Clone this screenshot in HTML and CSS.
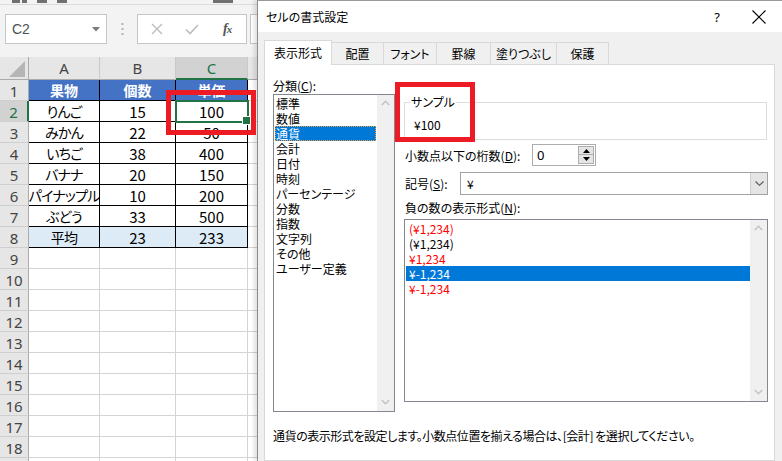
FILE: index.html
```html
<!DOCTYPE html>
<html lang="ja">
<head>
<meta charset="utf-8">
<title>セルの書式設定</title>
<link rel="stylesheet" href="styles.css">
</head>
<body>
<div class="screen">
  <section class="sheet">
    <div class="ribbon-edge">
      <span class="rb rb1"></span><span class="rb rb2"></span><span class="rb rb3"></span><span class="rb rb4"></span><span class="rb rb5"></span>
    </div>
    <div class="formula-bar">
      <div class="namebox">
        <span class="nb-text">C2</span>
        <svg class="nb-arrow" width="8" height="5" viewBox="0 0 8 5"><path d="M0 0H8L4 4.5Z" fill="#7a7a7a"/></svg>
      </div>
      <div class="grip">
        <svg width="3" height="12" viewBox="0 0 3 12"><rect x="0.5" y="0" width="2" height="2" fill="#b4b4b4"/><rect x="0.5" y="5" width="2" height="2" fill="#b4b4b4"/><rect x="0.5" y="10" width="2" height="2" fill="#b4b4b4"/></svg>
      </div>
      <div class="fb-buttons">
        <svg class="fb-icon" width="12" height="12" viewBox="0 0 12 12"><path d="M1 1L11 11M11 1L1 11" stroke="#bcbcbc" stroke-width="1.4" fill="none"/></svg>
        <svg class="fb-icon" width="14" height="11" viewBox="0 0 14 11"><path d="M1 5.5L5 9.5L13 1" stroke="#bcbcbc" stroke-width="1.6" fill="none"/></svg>
        <span class="fx">f<span class="fx-x">x</span></span>
      </div>
      <div class="fb-input"></div>
    </div>
    <div class="grid">
      <div class="corner"><svg width="29" height="23" viewBox="0 0 29 23"><path d="M25 4V20H9Z" fill="#b5b5b5"/></svg></div>
      <div class="ch">A</div><div class="ch">B</div><div class="ch on">C</div><div class="ch x"></div>

      <div class="rh">1</div><div class="c t hd jp">果物</div><div class="c t hd jp">個数</div><div class="c t hd jp">単価</div><div class="c x"></div>
      <div class="rh on">2</div><div class="c t jp">りんご</div><div class="c t">15</div><div class="c t sel">100</div><div class="c x"></div>
      <div class="rh">3</div><div class="c t jp">みかん</div><div class="c t">22</div><div class="c t">50</div><div class="c x"></div>
      <div class="rh">4</div><div class="c t jp">いちご</div><div class="c t">38</div><div class="c t">400</div><div class="c x"></div>
      <div class="rh">5</div><div class="c t jp">バナナ</div><div class="c t">20</div><div class="c t">150</div><div class="c x"></div>
      <div class="rh">6</div><div class="c t jp">パイナップル</div><div class="c t">10</div><div class="c t">200</div><div class="c x"></div>
      <div class="rh">7</div><div class="c t jp">ぶどう</div><div class="c t">33</div><div class="c t">500</div><div class="c x"></div>
      <div class="rh">8</div><div class="c t avg jp">平均</div><div class="c t avg">23</div><div class="c t avg">233</div><div class="c x"></div>
      <div class="rh">9</div><div class="c"></div><div class="c"></div><div class="c"></div><div class="c x"></div>
      <div class="rh">10</div><div class="c"></div><div class="c"></div><div class="c"></div><div class="c x"></div>
      <div class="rh">11</div><div class="c"></div><div class="c"></div><div class="c"></div><div class="c x"></div>
      <div class="rh">12</div><div class="c"></div><div class="c"></div><div class="c"></div><div class="c x"></div>
      <div class="rh">13</div><div class="c"></div><div class="c"></div><div class="c"></div><div class="c x"></div>
      <div class="rh">14</div><div class="c"></div><div class="c"></div><div class="c"></div><div class="c x"></div>
      <div class="rh">15</div><div class="c"></div><div class="c"></div><div class="c"></div><div class="c x"></div>
      <div class="rh">16</div><div class="c"></div><div class="c"></div><div class="c"></div><div class="c x"></div>
      <div class="rh">17</div><div class="c"></div><div class="c"></div><div class="c"></div><div class="c x"></div>
      <div class="rh">18</div><div class="c"></div><div class="c"></div><div class="c"></div><div class="c x"></div>
      <div class="rh"></div><div class="c"></div><div class="c"></div><div class="c"></div><div class="c x"></div>
    </div>
  </section>

  <section class="dialog">
    <header class="titlebar">
      <span class="title">セルの書式設定</span>
      <span class="help">?</span>
      <svg class="close" width="14" height="14" viewBox="0 0 14 14"><path d="M0.5 0.5L13.5 13.5M13.5 0.5L0.5 13.5" stroke="#000" stroke-width="1.1" fill="none"/></svg>
    </header>
    <nav class="tabs">
      <span class="tab active">表示形式</span>
      <span class="tab w52">配置</span>
      <span class="tab w53">フォント</span>
      <span class="tab w54">罫線</span>
      <span class="tab w66">塗りつぶし</span>
      <span class="tab w52">保護</span>
    </nav>
    <div class="panel">
      <div class="panel-main">
        <div class="col-left">
          <div class="label">分類(<u>C</u>):</div>
          <div class="listbox cat">
            <ul class="items">
              <li>標準</li><li>数値</li><li class="current focus">通貨</li><li>会計</li><li>日付</li><li>時刻</li><li>パーセンテージ</li><li>分数</li><li>指数</li><li>文字列</li><li>その他</li><li>ユーザー定義</li>
            </ul>
            <div class="vscroll">
              <svg width="9" height="6" viewBox="0 0 9 6"><path d="M0.8 5L4.5 1.3L8.2 5" stroke="#c4c4c4" stroke-width="1.6" fill="none"/></svg>
              <svg width="9" height="6" viewBox="0 0 9 6"><path d="M0.8 1L4.5 4.7L8.2 1" stroke="#c4c4c4" stroke-width="1.6" fill="none"/></svg>
            </div>
          </div>
        </div>
        <div class="col-right">
          <fieldset class="sample">
            <legend>サンプル</legend>
            <div class="sample-value">¥100</div>
          </fieldset>
          <div class="field-row decimals">
            <span class="label">小数点以下の桁数(<u>D</u>):</span>
            <div class="spin">
              <span class="spin-value">0</span>
              <div class="spin-buttons">
                <span class="spin-btn"><svg width="7" height="4" viewBox="0 0 7 4"><path d="M0 4H7L3.5 0Z" fill="#000"/></svg></span>
                <span class="spin-btn"><svg width="7" height="4" viewBox="0 0 7 4"><path d="M0 0H7L3.5 4Z" fill="#000"/></svg></span>
              </div>
            </div>
          </div>
          <div class="field-row symbol">
            <span class="label">記号(<u>S</u>):</span>
            <div class="combo">
              <span class="combo-value">¥</span>
              <span class="combo-btn"><svg width="9" height="5" viewBox="0 0 9 5"><path d="M0.5 0.5L4.5 4.3L8.5 0.5" stroke="#555" stroke-width="1.1" fill="none"/></svg></span>
            </div>
          </div>
          <div class="label neg-label">負の数の表示形式(<u>N</u>):</div>
          <div class="listbox neg">
            <ul class="items">
              <li class="red">(¥1,234)</li>
              <li>(¥1,234)</li>
              <li class="red">¥1,234</li>
              <li class="current">¥-1,234</li>
              <li class="red">¥-1,234</li>
            </ul>
            <div class="vscroll">
              <svg width="9" height="6" viewBox="0 0 9 6"><path d="M0.8 5L4.5 1.3L8.2 5" stroke="#c4c4c4" stroke-width="1.6" fill="none"/></svg>
              <svg width="9" height="6" viewBox="0 0 9 6"><path d="M0.8 1L4.5 4.7L8.2 1" stroke="#c4c4c4" stroke-width="1.6" fill="none"/></svg>
            </div>
          </div>
        </div>
      </div>
      <p class="desc">通貨の表示形式を設定します。小数点位置を揃える場合は、[会計] を選択してください。</p>
    </div>
  </section>

  <div class="callout callout-cell"></div>
  <div class="callout callout-sample"></div>
</div>
</body>
</html>
```

FILE: styles.css
```css
* { box-sizing: border-box; }
html, body { margin: 0; padding: 0; }
body {
  width: 782px;
  height: 461px;
  overflow: hidden;
  background: #fff;
  color: #000;
  font-family: "Noto Sans CJK JP", "Noto Sans", sans-serif;
  font-feature-settings: "palt";
}
.screen {
  position: relative;
  display: flex;
  width: 782px;
  height: 461px;
  overflow: hidden;
}

/* ---------- spreadsheet ---------- */
.sheet {
  flex: none;
  width: 257px;
  display: flex;
  flex-direction: column;
  background: #f3f3f3;
  overflow: hidden;
}
.ribbon-edge {
  flex: none;
  height: 5px;
  display: flex;
  align-items: flex-start;
  border-bottom: 1px solid #dcdcdc;
}
.rb { height: 3px; background: #707070; }
.rb1 { width: 8px; margin-left: 12px; }
.rb2 { width: 5px; margin-left: 2px; }
.rb3 { width: 10px; margin-left: 10px; }
.rb4 { width: 10px; margin-left: 10px; }
.rb5 { width: 20px; margin-left: 146px; }

.formula-bar {
  flex: none;
  height: 52px;
  display: flex;
  align-items: flex-start;
  padding-top: 9px;
}
.namebox {
  flex: none;
  width: 102px;
  height: 30px;
  margin-left: 5px;
  background: #fff;
  border: 1px solid #c6c6c6;
  display: flex;
  align-items: center;
  justify-content: space-between;
  padding: 0 6px 0 6px;
}
.nb-text {
  font-family: "Liberation Sans", sans-serif;
  font-size: 14px;
  color: #505050;
}
.grip {
  flex: none;
  width: 30px;
  height: 30px;
  display: flex;
  align-items: center;
  justify-content: center;
}
.fb-buttons {
  flex: none;
  width: 110px;
  height: 30px;
  background: #fff;
  border: 1px solid #c6c6c6;
  display: flex;
  align-items: center;
  padding-left: 13px;
}
.fb-icon { flex: none; }
.fb-icon + .fb-icon { margin-left: 22px; }
.fx {
  margin-left: 24px;
  font-family: "Liberation Serif", serif;
  font-style: italic;
  font-weight: bold;
  font-size: 14px;
  color: #555;
  letter-spacing: -1px;
}
.fx-x { font-size: 11px; }
.fb-input {
  flex: none;
  width: 30px;
  height: 30px;
  margin-left: 3px;
  background: #fff;
  border: 1px solid #c6c6c6;
}

.grid {
  flex: none;
  display: grid;
  grid-template-columns: 29px 71px 76px 72px 9px;
  grid-template-rows: 23px repeat(19, 21px);
  background: #fff;
}
.corner {
  background: #e6e6e6;
  border-right: 1px solid #ababab;
  border-bottom: 1px solid #ababab;
}
.corner svg { display: block; }
.ch, .rh {
  display: flex;
  align-items: center;
  justify-content: center;
  background: #e6e6e6;
  color: #444;
  font-family: "Noto Sans", sans-serif;
  font-size: 15px;
}
.ch {
  border-right: 1px solid #c9c9c9;
  border-bottom: 1px solid #ababab;
}
.ch.on {
  background: #d2d2d2;
  color: #217346;
  border-bottom: 2px solid #217346;
}
.ch.x { border-right: none; }
.rh {
  border-right: 1px solid #ababab;
  border-bottom: 1px solid #cfcfcf;
  padding-top: 1px;
}
.rh.on {
  background: #d2d2d2;
  color: #217346;
  border-right: 2px solid #217346;
}
.c {
  display: flex;
  align-items: center;
  justify-content: center;
  border-right: 1px solid #d4d4d4;
  border-bottom: 1px solid #d4d4d4;
  font-size: 15px;
  line-height: 1;
  white-space: nowrap;
}
.c.jp {
  font-size: 14px;
  letter-spacing: -0.8px;
}
.c.x { border-right: none; }
.t {
  border-right-color: #000;
  border-bottom-color: #000;
}
.hd {
  background: #4472c4;
  color: #fff;
  font-weight: bold;
}
.c.hd { letter-spacing: 0; }
.avg { background: #ddebf7; }
.sel {
  position: relative;
  outline: 2px solid #217346;
  outline-offset: -1px;
  z-index: 1;
}
.sel::after {
  content: "";
  position: absolute;
  right: -4px;
  bottom: -4px;
  width: 7px;
  height: 7px;
  background: #217346;
  border: 1px solid #fff;
}

/* ---------- dialog ---------- */
.dialog {
  flex: 1;
  display: flex;
  flex-direction: column;
  background: #f0f0f0;
  border-left: 1px solid #8c8c8c;
  border-top: 1px solid #9a9a9a;
  box-shadow: -3px 0 4px rgba(0, 0, 0, 0.12);
  font-size: 12px;
  line-height: 16px;
}
.titlebar {
  flex: none;
  height: 31px;
  background: #fff;
  display: flex;
  align-items: center;
  padding-left: 8px;
}
.title { flex: 1; font-size: 12px; }
.help {
  font-family: "Noto Sans", sans-serif;
  font-size: 13px;
  margin-right: 32px;
}
.close { flex: none; margin-right: 16px; }

.tabs {
  flex: none;
  height: 32px;
  display: flex;
  align-items: flex-end;
  padding-left: 6px;
}
.tab {
  height: 22px;
  display: flex;
  align-items: center;
  justify-content: center;
  background: #f0f0f0;
  border-top: 1px solid #d9d9d9;
  border-right: 1px solid #d9d9d9;
  padding-top: 1px;
}
.tab.active {
  position: relative;
  z-index: 1;
  width: 68px;
  height: 25px;
  margin-bottom: -1px;
  background: #fff;
  border-left: 1px solid #d9d9d9;
  padding-top: 0;
  padding-bottom: 1px;
}
.w52 { width: 52px; }
.w53 { width: 53px; }
.w54 { width: 54px; }
.w66 { width: 66px; }

.panel {
  flex: 1;
  margin: 0 7px 0 6px;
  background: #fff;
  border: 1px solid #d9d9d9;
  padding: 12px 6px 0 8px;
}
.panel-main {
  display: flex;
  gap: 9px;
}
.col-left {
  flex: none;
  width: 122px;
}
.label { line-height: 17px; }
.listbox {
  display: flex;
  background: #fff;
  border: 1px solid #828790;
}
.listbox.cat { height: 318px; }
.items {
  flex: 1;
  margin: 0;
  padding: 1px 0 0 0;
  list-style: none;
}
.items li {
  height: 15px;
  line-height: 15px;
  white-space: nowrap;
}
.cat .items li { margin: 0 1px; padding-left: 1px; }
.neg .items li { margin-left: 1px; padding-left: 3px; }
.items li.current { background: #0078d7; color: #fff; }
.items li.focus { outline: 1px dotted #f0a040; outline-offset: -1px; }
.items li.red { color: #ff0000; }
.vscroll {
  flex: none;
  width: 17px;
  background: #f0f0f0;
  display: flex;
  flex-direction: column;
  justify-content: space-between;
  align-items: center;
  padding: 5px 0 6px;
}
.vscroll svg { display: block; }

.col-right {
  flex: 1;
  display: flex;
  flex-direction: column;
}
.sample {
  margin: 18px 1px 0 0;
  padding: 8px 6px 6px 5px;
  border: 1px solid #dcdcdc;
  min-inline-size: 0;
}
.sample legend {
  padding: 0 1px;
  line-height: 14px;
}
.sample-value {
  line-height: 16px;
  padding-left: 4px;
}
.field-row {
  display: flex;
  align-items: center;
}
.decimals { margin-top: 4px; height: 22px; }
.decimals .label { width: 128px; padding-left: 1px; }
.spin {
  width: 64px;
  height: 22px;
  border: 1px solid #adadad;
  display: flex;
  align-items: center;
  justify-content: space-between;
  padding: 0 1px 0 4px;
}
.spin-value { font-family: "Noto Sans", sans-serif; font-size: 13px; }
.spin-buttons {
  display: flex;
  flex-direction: column;
}
.spin-btn {
  width: 16px;
  height: 9px;
  background: #e5e5e5;
  border: 1px solid #adadad;
  display: flex;
  align-items: center;
  justify-content: center;
}
.spin-btn + .spin-btn { border-top: none; height: 9px; }
.symbol { margin-top: 6px; height: 23px; }
.symbol .label { width: 56px; padding-left: 1px; }
.combo {
  flex: 1;
  height: 23px;
  border: 1px solid #a2a2a2;
  display: flex;
  align-items: center;
  justify-content: space-between;
  padding-left: 6px;
}
.combo-btn {
  width: 17px;
  height: 21px;
  background: #e5e5e5;
  border-left: 1px solid #cfcfcf;
  display: flex;
  align-items: center;
  justify-content: center;
}
.neg-label { margin-top: 5px; line-height: 16px; padding-left: 1px; }
.listbox.neg { margin-top: 3px; height: 183px; }

.desc {
  margin: 16px 0 0 0;
  line-height: 16px;
  white-space: nowrap;
  letter-spacing: -0.45px;
}

/* ---------- red annotation frames ---------- */
.callout {
  position: absolute;
  border: 5px solid #ed1c24;
  z-index: 5;
}
.callout-cell { left: 166px; top: 90px; width: 90px; height: 45px; }
.callout-sample { left: 395px; top: 82px; width: 80px; height: 60px; }
```
